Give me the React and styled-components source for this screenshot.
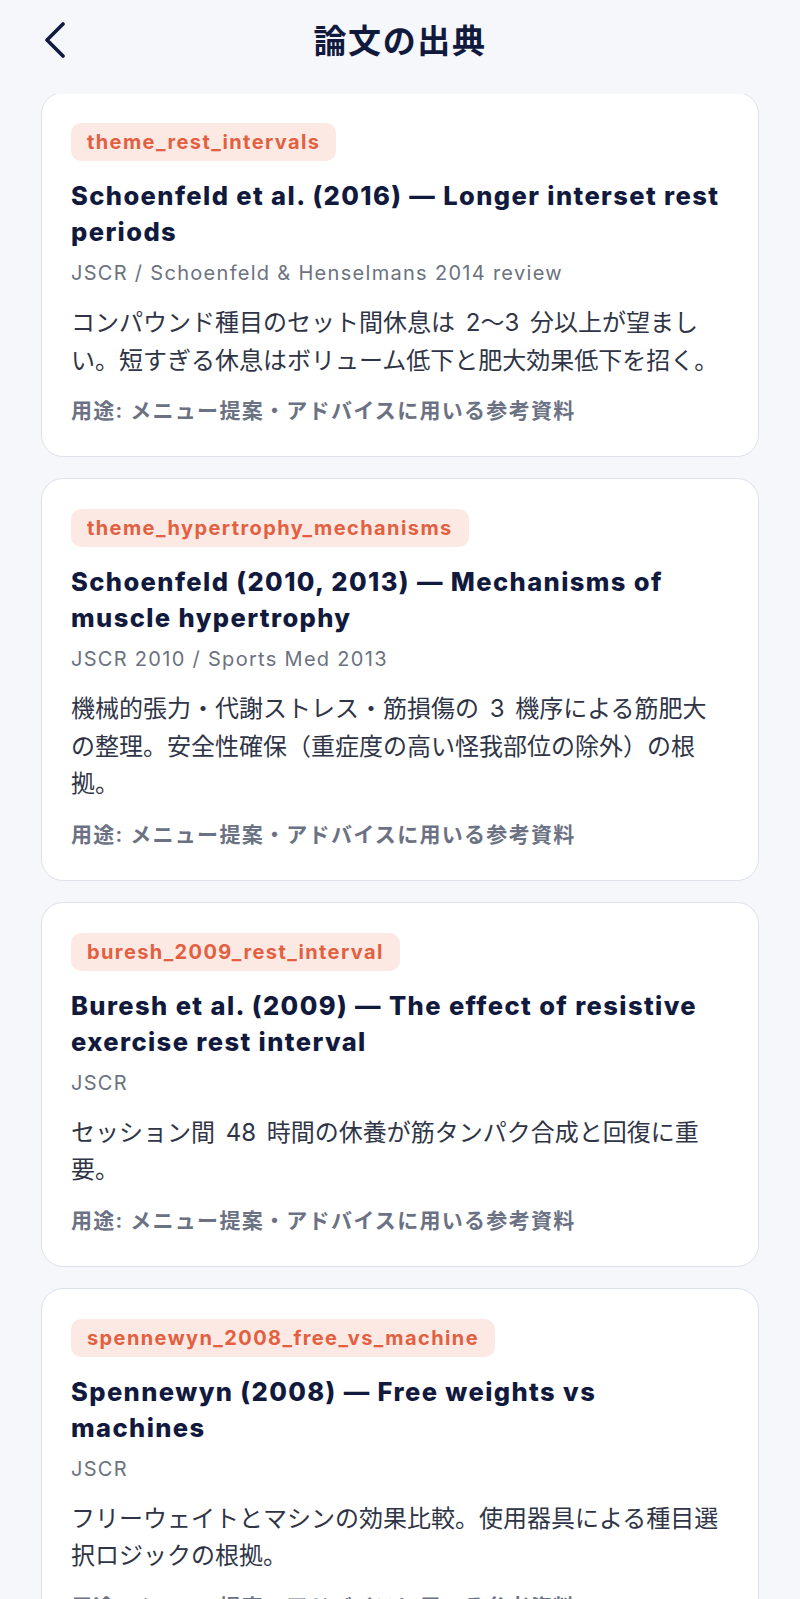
import styled, { createGlobalStyle } from "styled-components";

const sources = [
  {
    tag: "theme_rest_intervals",
    title: "Schoenfeld et al. (2016) — Longer interset rest periods",
    journal: "JSCR / Schoenfeld & Henselmans 2014 review",
    summary:
      "コンパウンド種目のセット間休息は 2〜3 分以上が望ましい。短すぎる休息はボリューム低下と肥大効果低下を招く。",
  },
  {
    tag: "theme_hypertrophy_mechanisms",
    title: "Schoenfeld (2010, 2013) — Mechanisms of muscle hypertrophy",
    journal: "JSCR 2010 / Sports Med 2013",
    summary:
      "機械的張力・代謝ストレス・筋損傷の 3 機序による筋肥大の整理。安全性確保（重症度の高い怪我部位の除外）の根拠。",
  },
  {
    tag: "buresh_2009_rest_interval",
    title: "Buresh et al. (2009) — The effect of resistive exercise rest interval",
    journal: "JSCR",
    summary: "セッション間 48 時間の休養が筋タンパク合成と回復に重要。",
  },
  {
    tag: "spennewyn_2008_free_vs_machine",
    title: "Spennewyn (2008) — Free weights vs machines",
    journal: "JSCR",
    summary:
      "フリーウェイトとマシンの効果比較。使用器具による種目選択ロジックの根拠。",
  },
];

export default function App() {
  return (
    <>
      <GlobalStyle />
      <Screen>
        <Header>
          <BackButton aria-label="戻る">
            <svg width="26" height="38" viewBox="0 0 26 38" fill="none">
              <path
                d="M21 4 L5 20 L21 36"
                stroke="#111a3d"
                strokeWidth="3.6"
                strokeLinecap="round"
                strokeLinejoin="round"
              />
            </svg>
          </BackButton>
          <HeaderTitle>論文の出典</HeaderTitle>
        </Header>
        <List>
          {sources.map((s) => (
            <Card key={s.tag}>
              <Tag>{s.tag}</Tag>
              <Title>{s.title}</Title>
              <Journal>{s.journal}</Journal>
              <Summary>{s.summary}</Summary>
              <Usage>用途: メニュー提案・アドバイスに用いる参考資料</Usage>
            </Card>
          ))}
        </List>
      </Screen>
    </>
  );
}

const GlobalStyle = createGlobalStyle`
  body {
    margin: 0;
    background: #f6f7fb;
    font-family: "Inter", "Noto Sans CJK JP", sans-serif;
  }
`;

const Screen = styled.div`
  min-height: 1599px;
  background: #f6f7fb;
`;

const Header = styled.header`
  position: sticky;
  top: 0;
  z-index: 2;
  height: 94px;
  background: #f6f7fb;
  display: flex;
  align-items: center;
  justify-content: center;
  padding-bottom: 16px;
  box-sizing: border-box;
`;

const BackButton = styled.button`
  position: absolute;
  left: 42px;
  top: 20px;
  border: 0;
  padding: 0;
  background: none;
  cursor: pointer;
`;

const HeaderTitle = styled.h1`
  margin: 0;
  font-family: "Noto Sans CJK JP", sans-serif;
  font-size: 33px;
  font-weight: 700;
  letter-spacing: 1.6px;
  color: #111a3d;
`;

const List = styled.main`
  margin-top: -2px;
  padding: 0 41px;
  display: flex;
  flex-direction: column;
  gap: 21px;
`;

const Card = styled.section`
  background: #fff;
  border: 1.5px solid #dde1ea;
  border-radius: 22px;
  padding: 30px 29px 30px;
  display: flex;
  flex-direction: column;
  align-items: flex-start;
`;

const Tag = styled.span`
  height: 38px;
  line-height: 38px;
  padding: 0 16px;
  border-radius: 10px;
  background: #fde9e4;
  color: #e2603f;
  font-size: 20px;
  font-weight: 700;
  letter-spacing: 1.4px;
  margin-bottom: 17px;
`;

const Title = styled.h2`
  margin: 0 0 9px;
  font-size: 25.5px;
  line-height: 36px;
  font-weight: 800;
  letter-spacing: 1.4px;
  color: #111a3d;
`;

const Journal = styled.div`
  font-size: 20px;
  line-height: 28px;
  letter-spacing: 1.3px;
  color: #6b7280;
  margin-bottom: 17px;
`;

const Summary = styled.p`
  margin: 0 0 17px;
  font-size: 24px;
  line-height: 37.5px;
  word-spacing: 4px;
  color: #2f3546;
`;

const Usage = styled.div`
  font-size: 21px;
  line-height: 30px;
  font-weight: 600;
  letter-spacing: 1.3px;
  color: #6b7283;
`;
